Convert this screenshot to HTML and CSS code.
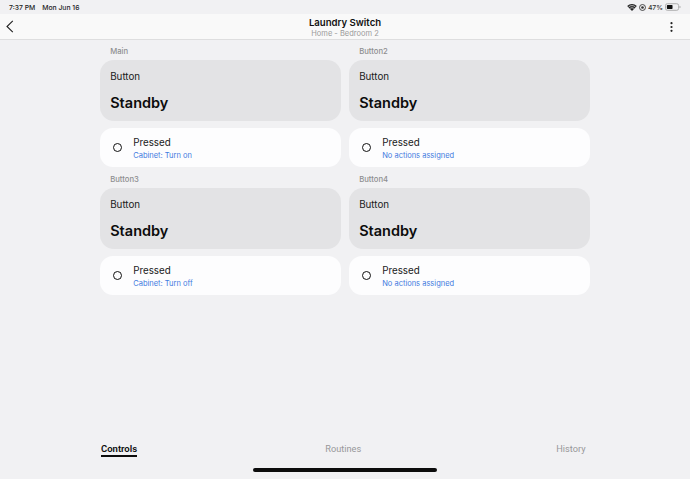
FILE: index.html
```html
<!DOCTYPE html>
<html lang="en">
<head>
<meta charset="utf-8">
<title>Laundry Switch</title>
<link rel="stylesheet" href="styles.css">
</head>
<body>
<div class="screen">
  <div class="status">
    <div class="status-left"><span>7:37 PM</span><span>Mon Jun 16</span></div>
    <div class="status-right">
      <svg class="wifi" width="10" height="7" viewBox="0 0 11 8"><path d="M5.5 8 L0 2.4 C3 -0.8 8 -0.8 11 2.4 Z" fill="#222"/><path d="M1.7 3.2 C3.8 1.4 7.2 1.4 9.3 3.2" stroke="#f1f1f3" stroke-width=".8" fill="none"/><path d="M3.3 5 C4.5 4.1 6.5 4.1 7.7 5" stroke="#f1f1f3" stroke-width=".8" fill="none"/></svg>
      <svg width="7" height="7" viewBox="0 0 8 8"><circle cx="4" cy="4" r="3.4" fill="none" stroke="#333" stroke-width="1"/><circle cx="4" cy="4" r="1.5" fill="#333"/></svg>
      <span class="pct">47%</span>
      <svg width="16" height="8" viewBox="0 0 17 8"><rect x=".5" y=".5" width="14" height="7" rx="2" fill="none" stroke="#aaa"/><rect x="2" y="2" width="6" height="4" rx=".6" fill="#111"/><rect x="15.4" y="3" width="1" height="2" fill="#aaa"/></svg>
    </div>
  </div>
  <header class="nav">
    <svg class="back" width="8" height="13" viewBox="0 0 8 13"><path d="M6.8 .8 L1 6.5 L6.8 12.2" fill="none" stroke="#222" stroke-width="1.1"/></svg>
    <div class="nav-title">
      <div class="title">Laundry Switch</div>
      <div class="subtitle">Home - Bedroom 2</div>
    </div>
    <svg class="more" width="3" height="10" viewBox="0 0 3 10"><circle cx="1.5" cy="1.2" r="1.1" fill="#222"/><circle cx="1.5" cy="5" r="1.1" fill="#222"/><circle cx="1.5" cy="8.8" r="1.1" fill="#222"/></svg>
  </header>
  <main class="grid">
    <section class="group">
      <div class="label">Main</div>
      <div class="card"><div class="card-name">Button</div><div class="card-state">Standby</div></div>
      <div class="row"><span class="dot"></span><div class="row-text"><div class="row-name">Pressed</div><div class="row-link">Cabinet: Turn on</div></div></div>
    </section>
    <section class="group">
      <div class="label">Button2</div>
      <div class="card"><div class="card-name">Button</div><div class="card-state">Standby</div></div>
      <div class="row"><span class="dot"></span><div class="row-text"><div class="row-name">Pressed</div><div class="row-link">No actions assigned</div></div></div>
    </section>
    <section class="group">
      <div class="label">Button3</div>
      <div class="card"><div class="card-name">Button</div><div class="card-state">Standby</div></div>
      <div class="row"><span class="dot"></span><div class="row-text"><div class="row-name">Pressed</div><div class="row-link">Cabinet: Turn off</div></div></div>
    </section>
    <section class="group">
      <div class="label">Button4</div>
      <div class="card"><div class="card-name">Button</div><div class="card-state">Standby</div></div>
      <div class="row"><span class="dot"></span><div class="row-text"><div class="row-name">Pressed</div><div class="row-link">No actions assigned</div></div></div>
    </section>
  </main>
  <nav class="tabs">
    <span class="tab active">Controls</span>
    <span class="tab">Routines</span>
    <span class="tab">History</span>
  </nav>
  <div class="home-wrap"><div class="home"></div></div>
</div>
</body>
</html>
```
FILE: styles.css
```css
* { box-sizing: border-box; }
html, body { margin: 0; padding: 0; }
body { background: #f1f1f3; font-family: Inter, "Liberation Sans", sans-serif; color: #111; }
.screen { width: 690px; height: 479px; display: flex; flex-direction: column; overflow: hidden; }
.status { height: 14px; display: flex; justify-content: space-between; align-items: center; padding: 0 9px 0 9px; font-size: 6.8px; font-weight: 500; color: #222; }
.status-left { display: flex; gap: 7px; }
.status-right { display: flex; align-items: center; gap: 2px; }
.pct { color: #333; }
.nav { height: 26px; background: #f9f9f9; border-bottom: 1px solid #dededf; display: flex; align-items: center; justify-content: space-between; padding: 0 17px 0 6px; position: relative; }
.nav-title { position: absolute; left: 0; right: 0; top: 2px; text-align: center; }
.title { font-size: 9.6px; font-weight: 600; line-height: 13px; color: #111; }
.subtitle { font-size: 7.5px; line-height: 10px; color: #999; }
.grid { display: grid; grid-template-columns: 241.6px 241.6px; column-gap: 7.4px; row-gap: 0; padding: 6px 0 0 99.7px; }
.group { display: flex; flex-direction: column; height: 128px; }
.label { height: 14px; line-height: 11px; padding-left: 10.5px; font-size: 7.7px; font-weight: 500; color: #8e8e90; }
.card { height: 61px; border-radius: 14px; background: #e3e3e5; padding: 10px 10.5px 0; }
.card-name { font-size: 9.8px; line-height: 14px; color: #1a1a1a; }
.card-state { font-size: 14.5px; font-weight: 600; line-height: 20px; margin-top: 9px; color: #0c0c0c; }
.row { height: 39px; margin-top: 7px; border-radius: 13px; background: #fdfdfe; display: flex; align-items: center; padding: 0 0 0 13px; gap: 11.5px; }
.row-text { padding-top: 1px; }
.dot { width: 9px; height: 9px; border: 1px solid #111; border-radius: 50%; flex: none; }
.row-name { font-size: 9.8px; line-height: 13px; color: #1a1a1a; }
.row-link { font-size: 7.5px; line-height: 11px; color: #3f7be0; margin-top: 1px; }
.tabs { margin-top: auto; display: grid; grid-template-columns: 1fr 1fr 1fr; padding: 0 104.5px 0 101px; height: 16px; font-family: Roboto, "Liberation Sans", sans-serif; }
.tab { font-size: 9.2px; line-height: 13px; color: #98989a; text-align: center; justify-self: center; }
.tab:first-child { justify-self: start; }
.tab:last-child { justify-self: end; }
.active { font-size: 9.5px; font-weight: 600; color: #0c0c0c; border-bottom: 2px solid #0c0c0c; height: 15px; }
.home-wrap { height: 21px; display: flex; justify-content: center; padding-top: 10px; }
.home { width: 184px; height: 4px; border-radius: 2px; background: #0c0c0c; }
```
